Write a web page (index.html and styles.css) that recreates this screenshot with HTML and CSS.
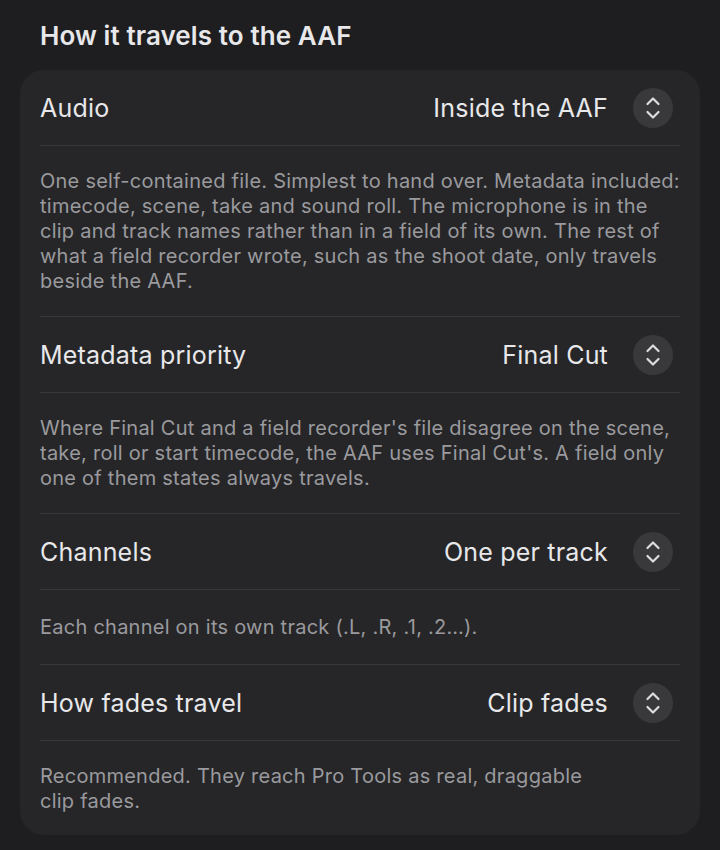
FILE: index.html
```html
<!DOCTYPE html>
<html lang="en">
<head>
<meta charset="utf-8">
<title>How it travels to the AAF</title>
<link rel="stylesheet" href="styles.css">
</head>
<body>
<div class="page">
  <h2 class="title">How it travels to the AAF</h2>
  <div class="card">
    <div class="row">
      <span class="label">Audio</span>
      <div class="value">
        <span class="value-text">Inside the AAF</span>
        <span class="stepper"><svg viewBox="0 0 40 40" width="40" height="40"><path d="M14.5 16 L20 10.5 L25.5 16 M14.5 24 L20 29.5 L25.5 24" fill="none" stroke="#dcdcde" stroke-width="2.2" stroke-linecap="round" stroke-linejoin="round"/></svg></span>
      </div>
    </div>
    <p class="desc">One self-contained file. Simplest to hand over. Metadata included: timecode, scene, take and sound roll. The microphone is in the clip and track names rather than in a field of its own. The rest of what a field recorder wrote, such as the shoot date, only travels beside the AAF.</p>
    <div class="row">
      <span class="label">Metadata priority</span>
      <div class="value">
        <span class="value-text">Final Cut</span>
        <span class="stepper"><svg viewBox="0 0 40 40" width="40" height="40"><path d="M14.5 16 L20 10.5 L25.5 16 M14.5 24 L20 29.5 L25.5 24" fill="none" stroke="#dcdcde" stroke-width="2.2" stroke-linecap="round" stroke-linejoin="round"/></svg></span>
      </div>
    </div>
    <p class="desc">Where Final Cut and a field recorder's file disagree on the scene, take, roll or start timecode, the AAF uses Final Cut's. A field only one of them states always travels.</p>
    <div class="row">
      <span class="label">Channels</span>
      <div class="value">
        <span class="value-text">One per track</span>
        <span class="stepper"><svg viewBox="0 0 40 40" width="40" height="40"><path d="M14.5 16 L20 10.5 L25.5 16 M14.5 24 L20 29.5 L25.5 24" fill="none" stroke="#dcdcde" stroke-width="2.2" stroke-linecap="round" stroke-linejoin="round"/></svg></span>
      </div>
    </div>
    <p class="desc desc-short">Each channel on its own track (.L, .R, .1, .2…).</p>
    <div class="row">
      <span class="label">How fades travel</span>
      <div class="value">
        <span class="value-text">Clip fades</span>
        <span class="stepper"><svg viewBox="0 0 40 40" width="40" height="40"><path d="M14.5 16 L20 10.5 L25.5 16 M14.5 24 L20 29.5 L25.5 24" fill="none" stroke="#dcdcde" stroke-width="2.2" stroke-linecap="round" stroke-linejoin="round"/></svg></span>
      </div>
    </div>
    <p class="desc desc-last">Recommended. They reach Pro Tools as real, draggable<br>clip fades.</p>
  </div>
</div>
</body>
</html>
```

FILE: styles.css
```css
html, body {
  margin: 0;
  padding: 0;
  background: #1e1e20;
}
body {
  font-family: Inter, "Noto Sans", "Liberation Sans", sans-serif;
  color: #e6e6e8;
  width: 720px;
  height: 850px;
  overflow: hidden;
}
.page {
  display: flex;
  flex-direction: column;
}
.title {
  margin: 0;
  height: 70px;
  display: flex;
  align-items: center;
  padding-left: 40px;
  font-size: 26px;
  font-weight: 600;
  letter-spacing: 0.1px;
  color: #e8e8ea;
}
.card {
  margin: 0 20px;
  background: #262628;
  border-radius: 24px;
  padding: 0 20px;
  display: flex;
  flex-direction: column;
}
.row {
  height: 75px;
  display: flex;
  align-items: center;
  justify-content: space-between;
  border-bottom: 1px solid #38383a;
}
.label {
  font-size: 25px;
  letter-spacing: 0.2px;
  color: #e8e8ea;
}
.value {
  display: flex;
  align-items: center;
  gap: 25px;
  padding-right: 7px;
}
.value-text {
  font-size: 25px;
  letter-spacing: 0.2px;
  color: #e8e8ea;
}
.stepper {
  width: 40px;
  height: 40px;
  border-radius: 50%;
  background: #39393b;
  display: flex;
}
.desc {
  margin: 0;
  padding: 23px 0 22px;
  font-size: 20px;
  letter-spacing: 0.25px;
  line-height: 25px;
  color: #9a9a9e;
  border-bottom: 1px solid #38383a;
}
.desc-short {
  padding: 25px 0 24px;
}
.desc-last {
  border-bottom: none;
  padding-bottom: 21px;
}
```
